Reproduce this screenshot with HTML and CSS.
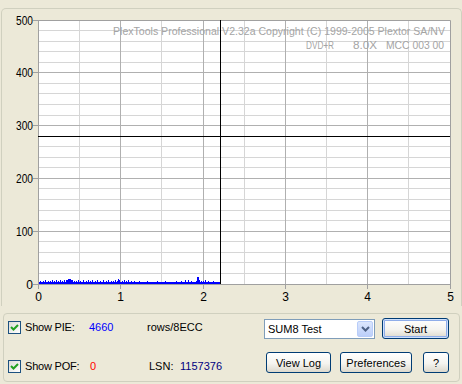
FILE: index.html
```html
<!DOCTYPE html>
<html lang="en">
<head>
    <meta charset="UTF-8">
    <title>PlexTools - PIE/PIF Scan</title>
    <link rel="stylesheet" href="styles.css">
</head>
<body>
    <div class="chart-frame">
        <svg class="chart" width="459" height="296" viewBox="2 9 459 296">
            <rect class="plot-bg" x="38" y="20" width="412" height="264"/>

            <!-- minor grid -->
            <path class="grid-minor" d="M39 30.5H450M39 41.5H450M39 51.5H450M39 62.5H450
                M39 83.5H450M39 93.5H450M39 104.5H450M39 115.5H450
                M39 146.5H450M39 157.5H450M39 167.5H450
                M39 188.5H450M39 199.5H450M39 210.5H450M39 220.5H450
                M39 241.5H450M39 252.5H450M39 262.5H450M39 273.5H450
                M79.5 20V284M161.5 20V284M244.5 20V284M326.5 20V284M408.5 20V284"/>

            <!-- major grid -->
            <path class="grid-major" d="M38 72.5H450M38 125.5H450M38 178.5H450M38 231.5H450
                M120.5 20V284M203.5 20V284M285.5 20V284M367.5 20V284"/>

            <!-- frame and ticks -->
            <path class="axis" d="M38.5 20V284.5H450.5V20.5H38
                M33 20.5H38M33 72.5H38M33 125.5H38M33 178.5H38M33 231.5H38M33 284.5H38
                M38.5 284V289M120.5 284V289M203.5 284V289M285.5 284V289M367.5 284V289M450.5 284V289"/>

            <text class="info" x="113" y="35" textLength="332" lengthAdjust="spacingAndGlyphs">PlexTools Professional V2.32a Copyright (C) 1999-2005 Plextor SA/NV</text>
            <text class="info" x="306" y="49" textLength="28" lengthAdjust="spacingAndGlyphs">DVD+R</text>
            <text class="info" x="353" y="49" textLength="24" lengthAdjust="spacingAndGlyphs">8.0X</text>
            <text class="info" x="386" y="49" textLength="58" lengthAdjust="spacingAndGlyphs">MCC 003 00</text>

            <g class="label" text-anchor="end">
                <text x="33" y="25" textLength="17" lengthAdjust="spacingAndGlyphs">500</text>
                <text x="33" y="77" textLength="17" lengthAdjust="spacingAndGlyphs">400</text>
                <text x="33" y="130" textLength="17" lengthAdjust="spacingAndGlyphs">300</text>
                <text x="33" y="183" textLength="17" lengthAdjust="spacingAndGlyphs">200</text>
                <text x="33" y="236" textLength="17" lengthAdjust="spacingAndGlyphs">100</text>
                <text x="33" y="289">0</text>
            </g>
            <g class="label" text-anchor="middle">
                <text x="38.5" y="301">0</text>
                <text x="120.5" y="301">1</text>
                <text x="203.5" y="301">2</text>
                <text x="285.5" y="301">3</text>
                <text x="367.5" y="301">4</text>
                <text x="450.5" y="301">5</text>
            </g>

            <!-- PIE samples -->
            <rect class="pie-base" x="39" y="282" width="181" height="2"/>
            <path class="pie" d="M40.5 283V281M43.5 283V281M45.5 283V280M48.5 283V281M50.5 283V281M52.5 283V280
                M54.5 283V281M56.5 283V280M58.5 283V281M60.5 283V280M62.5 283V281M64.5 283V280
                M66.5 283V280M67.5 283V280M68.5 283V279M69.5 283V279M70.5 283V279M71.5 283V280
                M72.5 283V280M74.5 283V281M76.5 283V281M78.5 283V280M80.5 283V281M83.5 283V280
                M86.5 283V281M88.5 283V280M90.5 283V281M92.5 283V280M95.5 283V281M97.5 283V280
                M100.5 283V281M103.5 283V280M106.5 283V281M108.5 283V280M111.5 283V281M113.5 283V281
                M115.5 283V280M117.5 283V281M118.5 283V279M119.5 283V280M122.5 283V281M124.5 283V280
                M126.5 283V281M128.5 283V280M131.5 283V281M134.5 283V281M139.5 283V281M147.5 283V281
                M157.5 283V281M165.5 283V281M176.5 283V281M181.5 283V281M185.5 283V280M188.5 283V280
                M191.5 283V281M196.5 283V281M197.5 283V277M198.5 283V277M199.5 283V280M201.5 283V281
                M203.5 283V281M205.5 283V280M208.5 283V281M213.5 283V281"/>

            <!-- cursor -->
            <path class="cursor" d="M220.5 20V284M38 136.5H450"/>
        </svg>
    </div>

    <div class="controls">
        <div class="row">
            <label class="check-label pie-label">
                <span class="checkbox">
                    <svg width="11" height="11" viewBox="0 0 11 11"><path d="M2 5L4.5 7.5L9 3"/></svg>
                </span>
                Show PIE:
            </label>
            <span class="value value-pie">4660</span>
            <span class="unit">rows/8ECC</span>
            <div class="combo">
                <span class="combo-text">SUM8 Test</span>
                <span class="combo-arrow">
                    <svg width="9" height="6" viewBox="0 0 9 6"><path d="M1 1L4.5 4.5L8 1"/></svg>
                </span>
            </div>
            <button class="btn btn-default">Start</button>
        </div>
        <div class="row row-second">
            <label class="check-label pof-label">
                <span class="checkbox">
                    <svg width="11" height="11" viewBox="0 0 11 11"><path d="M2 5L4.5 7.5L9 3"/></svg>
                </span>
                Show POF:
            </label>
            <span class="value value-pof">0</span>
            <span class="lsn-label">LSN:</span>
            <span class="lsn-value">1157376</span>
            <button class="btn btn-log">View Log</button>
            <button class="btn btn-prefs">Preferences</button>
            <button class="btn btn-help">?</button>
        </div>
    </div>
</body>
</html>
```

FILE: styles.css
```css
* {
    margin: 0;
    padding: 0;
    box-sizing: border-box;
}

body {
    width: 462px;
    height: 384px;
    overflow: hidden;
    background: #ece9d8;
    font-family: "Liberation Sans", Arial, sans-serif;
    font-size: 11px;
    color: #000;
}

.chart-frame {
    margin: 8px 0 0 1px;
    width: 461px;
    height: 298px;
    border: 1px solid #d0d0bf;
    border-bottom: none;
    border-radius: 5px 5px 0 0;
}

.chart {
    display: block;
    font-family: "Liberation Sans", Arial, sans-serif;
}

.plot-bg {
    fill: #fff;
}

.grid-minor {
    stroke: #d6d6d6;
    stroke-width: 1;
    fill: none;
}

.grid-major {
    stroke: #b0b0b0;
    stroke-width: 1;
    fill: none;
}

.axis {
    stroke: #a0a0a0;
    stroke-width: 1;
    fill: none;
}

.info {
    font-size: 11px;
    fill: #a4a4a4;
}

.label {
    font-size: 12px;
    fill: #000;
}

.pie-base {
    fill: #0000ff;
}

.pie {
    stroke: #0000ff;
    stroke-width: 1;
    fill: none;
}

.cursor {
    stroke: #000;
    stroke-width: 1;
    fill: none;
}

.controls {
    margin: 7px 2px 0 3px;
    height: 69px;
    border: 1px solid #d0d0bf;
    border-radius: 4px;
    padding: 4px 10px 0 4px;
}

.row {
    display: flex;
    align-items: flex-start;
    height: 22px;
}

.row-second {
    margin-top: 12px;
    height: 21px;
}

.check-label {
    display: flex;
    align-items: center;
    gap: 4px;
    height: 13px;
    line-height: 13px;
    margin-top: 3px;
    letter-spacing: -0.2px;
}

.pie-label {
    width: 81px;
}

.pof-label {
    width: 82px;
    margin-top: 8px;
}

.checkbox {
    width: 13px;
    height: 13px;
    border: 1px solid #1c5180;
    background: linear-gradient(135deg, #dcdcd7, #fff);
    display: flex;
    align-items: center;
    justify-content: center;
}

.checkbox svg {
    display: block;
}

.checkbox path {
    fill: none;
    stroke: #21a121;
    stroke-width: 2;
}

.value,
.unit,
.lsn-label,
.lsn-value {
    line-height: 13px;
    margin-top: 3px;
}

.row-second .value,
.row-second .lsn-label,
.row-second .lsn-value {
    margin-top: 8px;
}

.value-pie {
    width: 58px;
    color: #0000ff;
}

.unit {
    flex: 1;
}

.value-pof {
    width: 59px;
    color: #ff0000;
}

.lsn-label {
    width: 31px;
}

.lsn-value {
    flex: 1;
    color: #000080;
}

.combo {
    width: 111px;
    height: 20px;
    margin-top: 1px;
    border: 1px solid #7f9db9;
    background: #fff;
    display: flex;
    align-items: center;
    justify-content: space-between;
    padding: 0 1px 0 3px;
}

.combo-arrow {
    width: 16px;
    height: 16px;
    border: 1px solid #b9cdf9;
    border-radius: 2px;
    background: linear-gradient(#dbe6fd, #bccff9);
    display: flex;
    align-items: center;
    justify-content: center;
}

.combo-arrow svg {
    display: block;
}

.combo-arrow path {
    fill: none;
    stroke: #4d6185;
    stroke-width: 2;
}

.btn {
    height: 21px;
    border: 1px solid #003c74;
    border-radius: 3px;
    background: linear-gradient(#ffffff, #f5f4ef 55%, #dcd8cc);
    font-family: "Liberation Sans", Arial, sans-serif;
    font-size: 11px;
    color: #000;
}

.btn-default {
    width: 67px;
    margin-left: 7px;
    box-shadow: inset 0 0 0 1px #cee0fc, inset 0 0 0 2px #8fade9;
}

.btn-log {
    width: 65px;
}

.btn-prefs {
    width: 72px;
    margin-left: 9px;
}

.btn-help {
    width: 26px;
    margin-left: 11px;
}
```
